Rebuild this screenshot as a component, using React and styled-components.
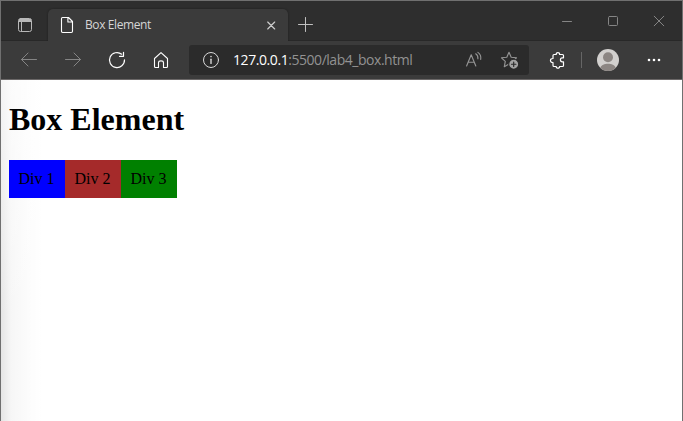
import React from "react";
import styled, { createGlobalStyle } from "styled-components";

const GlobalStyle = createGlobalStyle`
  * { box-sizing: border-box; }
  body { margin: 0; overflow: hidden; background: #fff; }
`;

const Window = styled.div`
  display: flex;
  flex-direction: column;
  width: 683px;
  height: 421px;
  border: 1px solid #707070;
  border-bottom: 0;
  background: #fff;
  font-family: "Open Sans", "Noto Sans", sans-serif;
`;

const TitleBar = styled.header`
  display: flex;
  flex: none;
  height: 40px;
  background: #2e2e2e;
  border-bottom: 1px solid #282828;
`;

const TabActions = styled.button`
  display: flex;
  width: 47px;
  padding: 17px 0 0 17px;
  border: 0;
  background: none;
`;

const Tab = styled.div`
  display: flex;
  align-items: center;
  width: 240px;
  height: 32px;
  margin-top: 8px;
  padding-left: 12px;
  border-radius: 5px 5px 0 0;
  background: #3b3b3b;
  box-shadow: 0 0 2px #1c1c1c;
  clip-path: inset(-3px -3px 0 -3px);
`;

const TabTitle = styled.span`
  flex: 1;
  margin-left: 11px;
  color: #d6d6d6;
  font-size: 12px;
  line-height: 16px;
  letter-spacing: -0.4px;
  white-space: nowrap;
`;

const TabClose = styled.button`
  display: flex;
  width: 22px;
  padding: 0;
  border: 0;
  background: none;
`;

const NewTab = styled.button`
  display: flex;
  padding: 16px 0 0 10px;
  border: 0;
  background: none;
`;

const WindowControls = styled.div`
  display: flex;
  gap: 34px;
  margin-left: auto;
  padding: 14px 17px 0 0;
`;

const Toolbar = styled.nav`
  display: flex;
  align-items: center;
  flex: none;
  height: 39px;
  padding-left: 18px;
  background: #3b3b3b;
  border-bottom: 1px solid #6b6868;
`;

const NavButtons = styled.div`
  display: flex;
  align-items: center;
  gap: 24px;
  width: 170px;
`;

const AddressBar = styled.div`
  display: flex;
  align-items: center;
  width: 340px;
  height: 30px;
  padding: 0 10px 0 13px;
  border-radius: 3px;
  background: #2b2b2b;
`;

const Url = styled.span`
  flex: 1;
  margin-left: 12px;
  color: #929292;
  font-size: 14px;
  line-height: 20px;
  letter-spacing: -0.47px;
  white-space: nowrap;
`;

const Host = styled.span`
  color: #fff;
  letter-spacing: -0.42px;
`;

const AddressActions = styled.div`
  display: flex;
  align-items: center;
  gap: 17px;
`;

const ToolbarActions = styled.div`
  display: flex;
  align-items: center;
  margin-left: 19px;
`;

const Divider = styled.span`
  width: 1px;
  height: 16px;
  margin: 0 15px 0 14px;
  background: #666;
`;

const MoreButton = styled.span`
  display: flex;
  margin-left: 28px;
`;

const Page = styled.main`
  flex: 1;
  padding: 21px 8px 0;
  background:
    linear-gradient(to bottom, rgba(255, 255, 255, 0.6), rgba(255, 255, 255, 0) 240px),
    linear-gradient(to right, rgba(0, 0, 0, 0.1), rgba(0, 0, 0, 0.035) 10px, rgba(0, 0, 0, 0.01) 28px, transparent 42px);
  color: #000;
  font-family: "Liberation Serif", "Times New Roman", serif;
  font-size: 16px;
`;

const Heading = styled.h1`
  margin: 0;
  font-size: 32px;
  line-height: 36px;
`;

const BoxRow = styled.section`
  display: flex;
  margin-top: 23px;
`;

const Box = styled.div`
  width: 56px;
  height: 38px;
  padding: 10px 0 0 9.5px;
  background: ${(p) => p.$color};
  line-height: 18px;
  white-space: nowrap;
`;

const Icon = styled.svg`
  display: block;
  flex: none;
  fill: none;
  stroke: ${(p) => p.$color || "#fff"};
  stroke-width: ${(p) => p.$weight || 1};
  stroke-linecap: round;
  stroke-linejoin: round;
`;

const Drawing = ({ w, h, color, weight, children }) => (
  <Icon width={w} height={h} viewBox={`0 0 ${w} ${h}`} $color={color} $weight={weight}>
    {children}
  </Icon>
);

const boxes = [
  { label: "Div 1", color: "blue" },
  { label: "Div 2", color: "brown" },
  { label: "Div 3", color: "green" },
];

export default function App() {
  return (
    <>
      <GlobalStyle />
      <Window>
        <TitleBar>
          <TabActions aria-label="Tab actions">
            <Drawing w={14} h={14} color="#b8b8b8">
              <rect x="0.5" y="0.5" width="13" height="13" rx="2" />
              <path d="M1 1h12v3H1z" fill="#b8b8b8" stroke="none" />
              <path d="M1 3.5h12M3.5 4v9" />
            </Drawing>
          </TabActions>
          <Tab>
            <Drawing w={14} h={18} weight={1.1}>
              <path d="M2.5 1.5h6l4 4v9.8q0 1.2-1.2 1.2H2.7q-1.2 0-1.2-1.2V2.5q0-1 1-1zM7.9 1.8V6h4.4" />
            </Drawing>
            <TabTitle>Box Element</TabTitle>
            <TabClose aria-label="Close tab">
              <Drawing w={10} h={10} color="#cecece" weight={1.15}>
                <path d="M1.7 2l7 7m0-7l-7 7" />
              </Drawing>
            </TabClose>
          </Tab>
          <NewTab aria-label="New tab">
            <Drawing w={15} h={15} color="#c0c0c0">
              <path d="M7.5 .5v14M.5 7.5h14" />
            </Drawing>
          </NewTab>
          <WindowControls>
            <Drawing w={12} h={12} color="#858585">
              <path d="M1.5 6.5h9" />
            </Drawing>
            <Drawing w={12} h={12} color="#858585">
              <rect x="1.5" y="1.5" width="9" height="9" rx="1" />
            </Drawing>
            <Drawing w={12} h={12} color="#858585">
              <path d="M1.2 1.2l9.6 9.6m0-9.6l-9.6 9.6" />
            </Drawing>
          </WindowControls>
        </TitleBar>
        <Toolbar>
          <NavButtons>
            <Drawing w={20} h={18} color="#858585">
              <path d="M17.5 8.5h-15M9 2L2.5 8.5 9 15" />
            </Drawing>
            <Drawing w={20} h={18} color="#858585">
              <path d="M2.5 8.5h15M11 2l6.5 6.5L11 15" />
            </Drawing>
            <Drawing w={20} h={18} weight={1.2}>
              <path d="M14.7 3.2A7.5 7.5 0 1 0 17.5 8.8M16.5 1.3v4h-4" />
            </Drawing>
            <Drawing w={20} h={18} weight={1.1}>
              <path d="M3.5 7.5L10 1.6l6.5 5.9v8q0 1-1 1h-3v-4.7q0-1.9-2.5-1.9t-2.5 1.9v4.7h-3q-1 0-1-1z" />
            </Drawing>
          </NavButtons>
          <AddressBar>
            <Drawing w={19} h={18} color="#d8d8d8">
              <circle cx="9" cy="9" r="7.5" />
              <path d="M9 8.2v4.2" strokeWidth="1.4" />
              <circle cx="9" cy="5.6" r=".8" fill="#d8d8d8" stroke="none" />
            </Drawing>
            <Url><Host>127.0.0.1</Host>:5500/lab4_box.html</Url>
            <AddressActions>
              <Drawing w={18} h={18} color="#949494" weight={1.15}>
                <path d="M1.6 15L6.2 3.8 10.8 15M3.3 11.2H9M10.7 2.8q2.5 1.6 2.2 5M12.9 1.4q3.6 2.6 2.8 7" />
              </Drawing>
              <Drawing w={19} h={18} color="#949494" weight={1.15}>
                <path d="M9 1.3l2.2 4.9 5.3.6-3.8 3.6 1 5.3L9 13l-4.7 2.7 1-5.3-3.8-3.6 5.3-.6z" />
                <circle cx="13.7" cy="13.2" r="5" fill="#a3a3a3" stroke="#2b2b2b" />
                <path d="M13.7 11v4.4M11.5 13.2h4.4" stroke="#2b2b2b" />
              </Drawing>
            </AddressActions>
          </AddressBar>
          <ToolbarActions>
            <Drawing w={19} h={18} weight={1.2}>
              <path d="M6 3.5h2.2c-.2-2.6 3.6-2.6 3.4 0h2.9q1 0 1 1v2.3h-1.2c-2.5 0-2.5 4 0 4h1.2v3.7q0 1-1 1h-2.9c.2 2.1-3.6 2.1-3.4 0H6q-1 0-1-1v-3c-3.4.2-3.4-4.2 0-4V4.5q0-1 1-1z" />
            </Drawing>
            <Divider />
            <Drawing w={22} h={24}>
              <circle cx="11" cy="12" r="11" fill="#d2d0ce" stroke="none" />
              <circle cx="11" cy="9.3" r="5" fill="#8c8683" stroke="none" />
              <path d="M3.3 19.7C5 14.3 17 14.3 18.7 19.7Q15.5 22.9 11 22.9T3.3 19.7z" fill="#8c8683" stroke="none" />
            </Drawing>
            <MoreButton>
              <Drawing w={16} h={18}>
                <g fill="#fff" stroke="none">
                  <circle cx="2" cy="9" r="1.3" />
                  <circle cx="7" cy="9" r="1.3" />
                  <circle cx="12" cy="9" r="1.3" />
                </g>
              </Drawing>
            </MoreButton>
          </ToolbarActions>
        </Toolbar>
        <Page>
          <Heading>Box Element</Heading>
          <BoxRow>
            {boxes.map((box) => (
              <Box key={box.label} $color={box.color}>{box.label}</Box>
            ))}
          </BoxRow>
        </Page>
      </Window>
    </>
  );
}
